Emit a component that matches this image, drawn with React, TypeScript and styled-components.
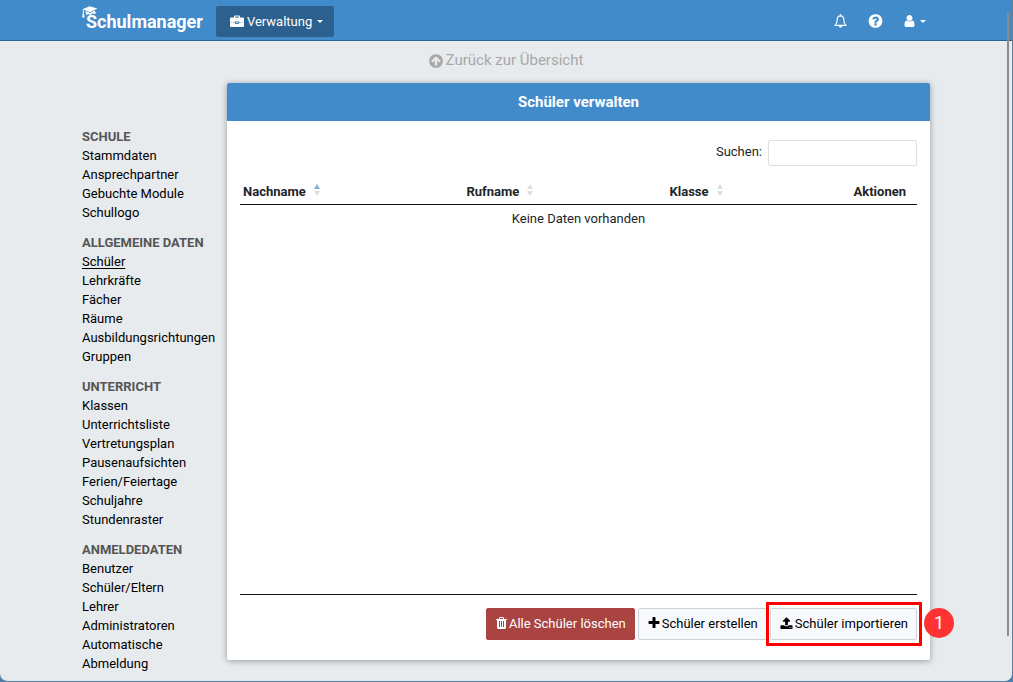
import React from "react";
import styled, { createGlobalStyle, css } from "styled-components";

const color = {
  blue: "#428bca",
  blueDark: "#2a6496",
  page: "#e7ebee",
  text: "#212529",
  muted: "#a8a8a8",
  danger: "#a94442",
  mark: "#ff0000",
};

const GlobalStyle = createGlobalStyle`
  *, *::before, *::after { box-sizing: border-box; }
  body {
    margin: 0;
    background: #4a7fae;
    color: ${color.text};
    font: 13px/19px Roboto, "Liberation Sans", sans-serif;
  }
  button, input { font: inherit; }
`;

const Shell = styled.div`
  position: relative;
  min-height: 100vh;
  overflow: hidden;
  background: ${color.page};
  border: solid #5c7f9c;
  border-width: 0 1px 1px 0;
  border-radius: 0 0 8px 8px;
`;

const ScrollThumb = styled.div`
  position: absolute;
  top: 12px;
  bottom: 45px;
  right: 3px;
  width: 2px;
  background: #8b8b8b;
`;

const Container = styled.div`
  display: flex;
  max-width: 848px;
  margin: 0 auto;
`;

const Navbar = styled.header`
  background: ${color.blue};
  border-bottom: 1px solid ${color.blueDark};
`;

const NavInner = styled(Container)`
  align-items: center;
  height: 40px;
  padding-top: 2px;
`;

const Brand = styled.a`
  position: relative;
  padding: 2px 0 0 4px;
  margin-right: 13px;
  color: #fff;
  font-size: 18px;
  line-height: 24px;
  font-weight: 700;
  text-decoration: none;
`;

const BrandCap = styled.svg`
  position: absolute;
  left: 0;
  top: -2px;
  width: 16px;
  height: 13px;
`;

const NavButton = styled.button<{ $active?: boolean }>`
  display: flex;
  align-items: center;
  gap: 3px;
  height: 31px;
  padding: 0;
  border: 0;
  border-radius: 2px;
  background: transparent;
  color: #fff;
  ${(p) =>
    p.$active &&
    css`
      padding: 0 11px 0 14px;
      background: #2b608f;
    `}
`;

const NavIcons = styled.div`
  display: flex;
  align-items: center;
  gap: 21px;
  margin-left: auto;
  padding-right: 4px;
`;

const Caret = styled.span`
  margin-left: 2px;
  border: 3px solid transparent;
  border-top-color: currentColor;
  border-bottom: 0;
`;

const BackRow = styled.div`
  display: flex;
  justify-content: center;
  height: 42px;
  padding-top: 9px;
`;

const BackLink = styled.a`
  display: flex;
  align-items: center;
  gap: 3px;
  height: 21px;
  color: ${color.muted};
  font-size: 15px;
  text-decoration: none;
`;

const Sidebar = styled.nav`
  flex: 0 0 145px;
  padding: 44px 8px 8px 0;
`;

const NavGroup = styled.section`
  margin-bottom: 11px;
  &:last-child { margin-bottom: 0; }
`;

const GroupTitle = styled.h2`
  margin: 0;
  color: #555;
  font-size: 13px;
  font-weight: 700;
  text-transform: uppercase;
`;

const GroupList = styled.ul`
  margin: 0;
  padding: 0;
  list-style: none;
`;

const SideLink = styled.a<{ $current?: boolean }>`
  color: #000;
  text-decoration: ${(p) => (p.$current ? "underline" : "none")};
  text-underline-offset: 2px;
`;

const Card = styled.main`
  flex: 1;
  align-self: flex-start;
  background: #fff;
  border-radius: 2px;
  box-shadow: 0 1px 6px rgba(0, 0, 0, 0.35);
`;

const CardTitle = styled.h1`
  margin: 0;
  padding: 9px;
  border-radius: 2px 2px 0 0;
  background: ${color.blue};
  color: #fff;
  font-size: 15px;
  line-height: 20px;
  font-weight: 700;
  text-align: center;
`;

const CardBody = styled.div`
  padding: 19px 13px 20px;
`;

const SearchRow = styled.div`
  display: flex;
  justify-content: flex-end;
  gap: 6px;
  margin-bottom: 12px;
  line-height: 24px;
`;

const SearchInput = styled.input`
  width: 149px;
  height: 26px;
  padding: 0 6px;
  border: 1px solid #dcdfe4;
  border-radius: 2px;
  background: #fff;
`;

const TableArea = styled.div`
  min-height: 417px;
  border-bottom: 1px solid #111;
`;

const Table = styled.table`
  width: 100%;
  table-layout: fixed;
  border-collapse: separate;
  border-spacing: 0;
`;

const HeadCell = styled.th<{ $width: number; $center?: boolean }>`
  width: ${(p) => p.$width}%;
  height: 27px;
  padding: 0 0 0 ${(p) => (p.$center ? 0 : 3)}px;
  border-bottom: 1px solid #111;
  font-weight: 700;
  text-align: ${(p) => (p.$center ? "center" : "left")};
`;

const SortIcon = styled.svg`
  width: 6px;
  height: 12px;
  margin-left: 8px;
`;

const EmptyCell = styled.td`
  padding: 4px 0;
  text-align: center;
`;

const Actions = styled.div`
  display: flex;
  justify-content: flex-end;
  gap: 3px;
  margin-top: 13px;
`;

const Button = styled.button<{ $danger?: boolean }>`
  display: flex;
  align-items: center;
  gap: 2px;
  height: 32px;
  padding: 0 8px 2px 9px;
  border: 1px solid ${(p) => (p.$danger ? color.danger : "#ccd3da")};
  border-radius: 2px;
  background: ${(p) => (p.$danger ? color.danger : "#f7f9fc")};
  color: ${(p) => (p.$danger ? "#fff" : "#000")};
  white-space: nowrap;
`;

const Marked = styled.div`
  position: relative;
  &::after {
    content: "";
    position: absolute;
    inset: -6px -5px -6px -4px;
    border: 3px solid ${color.mark};
    pointer-events: none;
  }
`;

const StepBadge = styled.span`
  position: absolute;
  left: calc(100% + 7px);
  top: 0;
  width: 30px;
  height: 30px;
  border-radius: 50%;
  background: #ff3333;
  color: #fff;
  font-size: 18px;
  line-height: 30px;
  text-align: center;
`;

const paths = {
  question:
    "M1024 1376v-192q0-14-9-23t-23-9h-192q-14 0-23 9t-9 23v192q0 14 9 23t23 9h192q14 0 23-9t9-23zm256-672q0-88-55.5-163t-138.5-116-170-41q-243 0-371 213-15 24 8 42l132 100q7 6 19 6 16 0 25-12 53-68 86-92 34-24 86-24 48 0 85.5 26t37.5 59q0 38-20 61t-68 45q-63 28-115.5 86.5t-52.5 125.5v36q0 14 9 23t23 9h192q14 0 23-9t9-23q0-19 21.5-49.5t54.5-49.5q32-18 49-28.5t46-35 44.5-48 28-60.5 12.5-81zm384 192q0 209-103 385.5t-279.5 279.5-385.5 103-385.5-103-279.5-279.5-103-385.5 103-385.5 279.5-279.5 385.5-103 385.5 103 279.5 279.5 103 385.5z",
  arrowUp:
    "M1412 895q0-27-18-45l-362-362-91-91q-18-18-45-18t-45 18l-91 91-362 362q-18 18-18 45t18 45l91 91q18 18 45 18t45-18l189-189v502q0 26 19 45t45 19h128q26 0 45-19t19-45v-502l189 189q19 19 45 19t45-19l91-91q18-18 18-45zm252 1q0 209-103 385.5t-279.5 279.5-385.5 103-385.5-103-279.5-279.5-103-385.5 103-385.5 279.5-279.5 385.5-103 385.5 103 279.5 279.5 103 385.5z",
  plus: "M1600 736v192q0 40-28 68t-68 28h-416v416q0 40-28 68t-68 28h-192q-40 0-68-28t-28-68v-416h-416q-40 0-68-28t-28-68v-192q0-40 28-68t68-28h416v-416q0-40 28-68t68-28h192q40 0 68 28t28 68v416h416q40 0 68 28t28 68z",
  user: "M1536 1399q0 109-62.5 187t-150.5 78h-854q-88 0-150.5-78t-62.5-187q0-85 8.5-160.5t31.5-152 58.5-131 94-89 134.5-34.5q131 128 313 128t313-128q76 0 134.5 34.5t94 89 58.5 131 31.5 152 8.5 160.5zm-256-887q0 159-112.5 271.5t-271.5 112.5-271.5-112.5-112.5-271.5 112.5-271.5 271.5-112.5 271.5 112.5 112.5 271.5z",
  upload:
    "M1344 1472q0-26-19-45t-45-19-45 19-19 45 19 45 45 19 45-19 19-45zm256 0q0-26-19-45t-45-19-45 19-19 45 19 45 45 19 45-19 19-45zm128-224v320q0 40-28 68t-68 28h-1472q-40 0-68-28t-28-68v-320q0-40 28-68t68-28h427q21 56 70.5 92t110.5 36h256q61 0 110.5-36t70.5-92h427q40 0 68 28t28 68zm-325-648q-17 40-59 40h-256v448q0 26-19 45t-45 19h-256q-26 0-45-19t-19-45v-448h-256q-42 0-59-40-17-39 14-69l448-448q18-19 45-19t45 19l448 448q31 30 14 69z",
  trash:
    "M704 1376v-704q0-14-9-23t-23-9h-64q-14 0-23 9t-9 23v704q0 14 9 23t23 9h64q14 0 23-9t9-23zm256 0v-704q0-14-9-23t-23-9h-64q-14 0-23 9t-9 23v704q0 14 9 23t23 9h64q14 0 23-9t9-23zm256 0v-704q0-14-9-23t-23-9h-64q-14 0-23 9t-9 23v704q0 14 9 23t23 9h64q14 0 23-9t9-23zm-544-992h448l-48-117q-7-9-17-11h-317q-10 2-17 11zm928 32v64q0 14-9 23t-23 9h-96v948q0 83-47 143.5t-113 60.5h-832q-66 0-113-58.5t-47-141.5v-952h-96q-14 0-23-9t-9-23v-64q0-14 9-23t23-9h309l70-167q15-37 54-63t79-26h320q40 0 79 26t54 63l70 167h309q14 0 23 9t9 23z",
};

function Icon({ name, size, crop = 0 }: { name: keyof typeof paths; size: number; crop?: number }) {
  const span = 1792 - 2 * crop;
  return (
    <svg
      width={Math.round((size * span) / 1792)}
      height={size}
      viewBox={`${crop} 0 ${span} 1792`}
      fill="currentColor"
      aria-hidden="true"
    >
      <path d={paths[name]} />
    </svg>
  );
}

function Briefcase() {
  return (
    <svg width="14" height="13" viewBox="0 0 14 13" fill="currentColor" aria-hidden="true">
      <path
        d="M4 2.500V1.400Q4 .4 5 .4h4q1 0 1 1v1.100h3q1 0 1 1v3.700H9.300V6.500H4.700v.7H0V3.500q0-1 1-1zM5.200 2.500h3.600v-1H5.200z"
        fillRule="evenodd"
      />
      <path d="M0 7.700h4.700Q5.200 9 7 9t2.300-1.300H14V11q0 1-1 1H1q-1 0-1-1z" />
      <path d="M0 7h4.700v1H0zM9.300 7H14v1H9.300z" opacity=".6" />
      <path d="M5.800 7.200h2.400v.9H5.800z" />
    </svg>
  );
}

function Bell() {
  return (
    <svg width="13" height="15" viewBox="0 0 13 15" fill="none" stroke="currentColor" aria-hidden="true">
      <path
        d="M6.500 1.900C4 1.900 3.200 4 3.200 5.800c0 2.800-.8 4.400-2.200 5.600h11c-1.400-1.200-2.200-2.800-2.200-5.600 0-1.800-.8-3.900-3.300-3.900z"
        strokeWidth="1.200"
        strokeLinejoin="round"
      />
      <path d="M6.500.7v1.200" strokeWidth="1.300" strokeLinecap="round" />
      <path d="M4.700 12h3.600q-.3 1.800-1.800 1.800T4.700 12z" fill="currentColor" stroke="none" />
    </svg>
  );
}

const groups: { title: string; items: string[] }[] = [
  { title: "Schule", items: ["Stammdaten", "Ansprechpartner", "Gebuchte Module", "Schullogo"] },
  {
    title: "Allgemeine Daten",
    items: ["Schüler", "Lehrkräfte", "Fächer", "Räume", "Ausbildungsrichtungen", "Gruppen"],
  },
  {
    title: "Unterricht",
    items: [
      "Klassen",
      "Unterrichtsliste",
      "Vertretungsplan",
      "Pausenaufsichten",
      "Ferien/Feiertage",
      "Schuljahre",
      "Stundenraster",
    ],
  },
  {
    title: "Anmeldedaten",
    items: ["Benutzer", "Schüler/Eltern", "Lehrer", "Administratoren", "Automatische Abmeldung"],
  },
];

const columns = [
  { label: "Nachname", width: 33, sorted: true },
  { label: "Rufname", width: 30 },
  { label: "Klasse", width: 26 },
  { label: "Aktionen", width: 11, center: true },
];

export default function App() {
  return (
    <Shell>
      <GlobalStyle />
      <Navbar>
        <NavInner>
          <Brand href="#">
            <BrandCap viewBox="0 0 16 13" fill="#fff" aria-hidden="true">
              <path d="M.4 3.300 7.600.2l7.800 2.300-7.200 3.700z" />
              <path d="M3.400 5 8.200 7l4.900-2.500.6 3.700Q11 6.600 8.600 8.900 6 7.300 4.200 9.200z" />
              <path d="M1.300 3.600v5.200" stroke="#fff" strokeWidth="1" />
              <path d="M.6 8h1.500l.6 3.400H.2z" />
            </BrandCap>
            Schulmanager
          </Brand>
          <NavButton $active>
            <Briefcase />
            Verwaltung
            <Caret />
          </NavButton>
          <NavIcons>
            <NavButton aria-label="Benachrichtigungen">
              <Bell />
            </NavButton>
            <NavButton aria-label="Hilfe">
              <Icon name="question" size={16} crop={64} />
            </NavButton>
            <NavButton aria-label="Benutzerkonto">
              <Icon name="user" size={14} crop={192} />
              <Caret />
            </NavButton>
          </NavIcons>
        </NavInner>
      </Navbar>

      <BackRow>
        <BackLink href="#">
          <Icon name="arrowUp" size={16} crop={128} />
          Zurück zur Übersicht
        </BackLink>
      </BackRow>

      <Container>
        <Sidebar>
          {groups.map((group) => (
            <NavGroup key={group.title}>
              <GroupTitle>{group.title}</GroupTitle>
              <GroupList>
                {group.items.map((item) => (
                  <li key={item}>
                    <SideLink href="#" $current={item === "Schüler"}>
                      {item}
                    </SideLink>
                  </li>
                ))}
              </GroupList>
            </NavGroup>
          ))}
        </Sidebar>

        <Card>
          <CardTitle>Schüler verwalten</CardTitle>
          <CardBody>
            <SearchRow>
              <label htmlFor="search">Suchen:</label>
              <SearchInput id="search" type="text" />
            </SearchRow>
            <TableArea>
              <Table>
                <thead>
                  <tr>
                    {columns.map((c) => (
                      <HeadCell key={c.label} $width={c.width} $center={c.center} scope="col">
                        {c.label}
                        {!c.center && (
                          <SortIcon viewBox="0 0 6 12" aria-hidden="true">
                            <path d="M3 0l3 5H0z" fill={c.sorted ? "#80b1e0" : "#dcdfe1"} />
                            <path d="M3 12l3-5H0z" fill="#dcdfe1" />
                          </SortIcon>
                        )}
                      </HeadCell>
                    ))}
                  </tr>
                </thead>
                <tbody>
                  <tr>
                    <EmptyCell colSpan={4}>Keine Daten vorhanden</EmptyCell>
                  </tr>
                </tbody>
              </Table>
            </TableArea>
            <Actions>
              <Button $danger>
                <Icon name="trash" size={14} crop={192} />
                Alle Schüler löschen
              </Button>
              <Button>
                <Icon name="plus" size={14} crop={128} />
                Schüler erstellen
              </Button>
              <Marked>
                <Button>
                  <Icon name="upload" size={13} />
                  Schüler importieren
                </Button>
                <StepBadge>1</StepBadge>
              </Marked>
            </Actions>
          </CardBody>
        </Card>
      </Container>
      <ScrollThumb />
    </Shell>
  );
}
